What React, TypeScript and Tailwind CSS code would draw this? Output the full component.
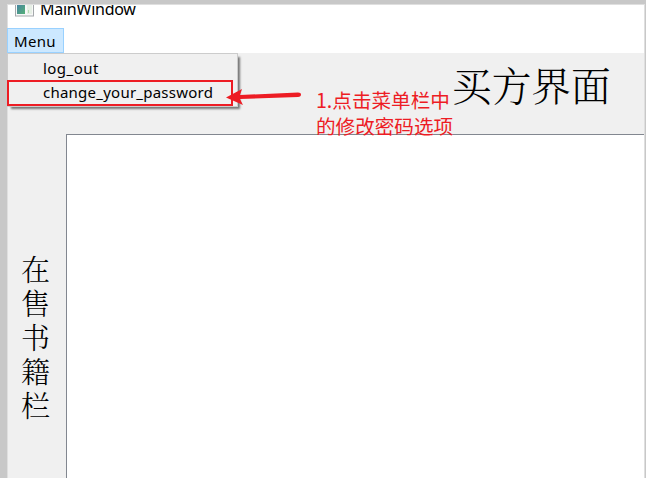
const uiFont = "font-['Noto_Sans','Noto_Sans_CJK_SC',sans-serif]";
const songFont = "font-['Noto_Serif_CJK_SC','Noto_Sans_CJK_SC',serif] font-light";

function TitleBar() {
  return (
    <header className="flex h-6 items-start overflow-hidden bg-white">
      <svg className="-mt-[4px] ml-[7px] shrink-0" width="20" height="16" viewBox="0 0 20 16">
        <defs>
          <linearGradient id="pane" x1="0" y1="0" x2="1" y2="1">
            <stop offset="0" stopColor="#4580a5" />
            <stop offset="1" stopColor="#55b077" />
          </linearGradient>
        </defs>
        <rect x="0.5" y="0.5" width="18" height="14.5" fill="#f8f8f8" stroke="#a5a9ac" />
        <rect x="2" y="2" width="8" height="11" fill="url(#pane)" />
        <rect x="12" y="2" width="5" height="11" fill="#e6efe5" />
        <rect x="13" y="9" width="1" height="3" fill="#b8dcb3" />
      </svg>
      <span className="-mt-[8px] ml-[5px] text-[16px] leading-6 tracking-[-0.25px]">MainWindow</span>
    </header>
  );
}

function DropdownMenu() {
  return (
    <div className="absolute -left-px top-0 h-[54px] w-[231px] border border-[#cccccc] bg-[#f0f0f0] shadow-[3px_3px_2px_-1px_#777777]">
      <div className="h-[26px] pl-[35px] pt-[2px] text-[15px] leading-6 tracking-[0.45px]">log_out</div>
      <div className="-ml-px flex h-[26px] w-[226px] items-center border-2 border-[#ed1c24] pb-0.5 pl-[34px] text-[15px] leading-5 tracking-[0.24px]">
        change_your_password
      </div>
      <svg className="absolute left-[218px] top-[33px]" width="78" height="20" viewBox="0 0 78 20" fill="#ed1c24">
        <path d="M0 10.5 16 2 14 8 72 5.5Q75 5.5 75 7.5Q75 9.5 72 10L14 12 17 18Z" />
      </svg>
    </div>
  );
}

export default function App() {
  return (
    <div className={`h-[478px] w-[646px] overflow-hidden bg-[#c8c8c8] pl-[7px] pr-px pt-1 text-black ${uiFont}`}>
      <main className="flex h-[474px] flex-col border-x border-t border-[#dfdfdf] bg-[#f0f0f0]">
        <TitleBar />
        <nav className="flex h-6 bg-white">
          <button className="-mt-px -ml-px h-[25px] w-[57px] border border-[#99d1ff] bg-[#cce8ff] pr-px text-[15px] leading-[24px] tracking-[0.35px]">Menu</button>
        </nav>
        <section className="relative h-[81px] shrink-0">
          <DropdownMenu />
          <p className="absolute left-[308px] top-[34px] whitespace-nowrap font-['Noto_Sans_CJK_SC',sans-serif] text-[19.6px] font-normal leading-[26px] text-[#ed1c24]">
            1.点击菜单栏中<br />的修改密码选项
          </p>
          <h1 className={`ml-[444px] pt-[5px] text-[39.7px] leading-[52px] whitespace-nowrap ${songFont}`}>买方界面</h1>
        </section>
        <section className="flex min-h-0 flex-1">
          <aside className={`w-[58px] pl-[13px] pt-[118px] text-[29px] leading-[34px] ${songFont}`}>
            {["在", "售", "书", "籍", "栏"].map((character) => (
              <div key={character}>{character}</div>
            ))}
          </aside>
          <div className="flex-1 border-l border-t border-[#828790] bg-white" />
        </section>
      </main>
    </div>
  );
}
